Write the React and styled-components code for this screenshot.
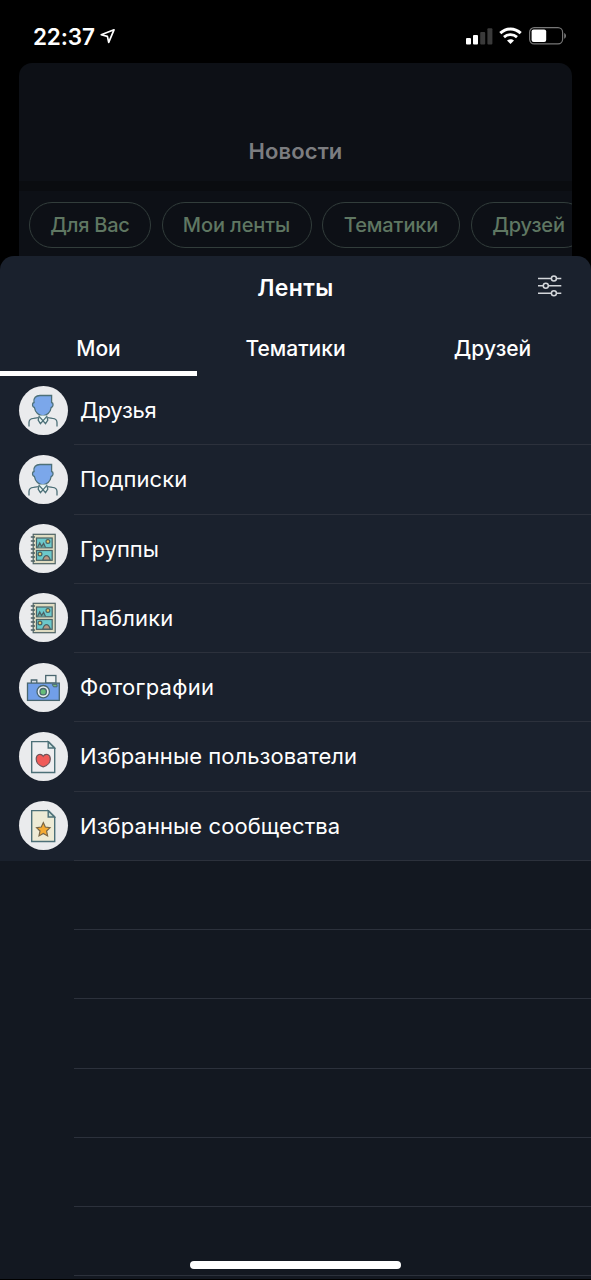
import React from "react";
import styled, { createGlobalStyle } from "styled-components";

const chips = [
  { label: "Для Вас", width: 122, spacing: "-0.25px" },
  { label: "Мои ленты", width: 150, spacing: "-0.1px" },
  { label: "Тематики", width: 138, spacing: "-0.1px" },
  { label: "Друзей", width: 116, spacing: "-0.2px" },
];

const tabs = ["Мои", "Тематики", "Друзей"];

const feeds = [
  { label: "Друзья", icon: PersonIcon, spacing: "-0.35px" },
  { label: "Подписки", icon: PersonIcon, spacing: "0.05px" },
  { label: "Группы", icon: AlbumIcon, spacing: "0px" },
  { label: "Паблики", icon: AlbumIcon, spacing: "0.15px" },
  { label: "Фотографии", icon: CameraIcon, spacing: "0.25px" },
  { label: "Избранные пользователи", icon: HeartIcon, spacing: "0.05px" },
  { label: "Избранные сообщества", icon: StarIcon, spacing: "0.08px" },
];

const emptyRows = [1, 2, 3, 4, 5, 6];

function App() {
  return (
    <Screen>
      <GlobalStyle />
      <StatusBar>
        <Clock>22:37</Clock>
        <LocationIcon />
        <StatusIcons>
          <SignalIcon />
          <WifiIcon />
          <BatteryIcon />
        </StatusIcons>
      </StatusBar>

      <NewsCard>
        <NewsHeader>Новости</NewsHeader>
        <Chips>
          {chips.map((chip) => (
            <Chip key={chip.label} $width={chip.width} $spacing={chip.spacing}>
              {chip.label}
            </Chip>
          ))}
        </Chips>
      </NewsCard>

      <Sheet>
        <SheetHeader>
          <SheetTitle>Ленты</SheetTitle>
          <FilterButton aria-label="Настройки">
            <FilterIcon />
          </FilterButton>
        </SheetHeader>
        <Tabs>
          {tabs.map((tab, i) => (
            <Tab key={tab} $active={i === 0}>
              {tab}
            </Tab>
          ))}
        </Tabs>
        <FeedList>
          {feeds.map(({ label, icon: Icon, spacing }) => (
            <Row key={label}>
              <Avatar>
                <Icon />
              </Avatar>
              <RowBody $spacing={spacing}>{label}</RowBody>
            </Row>
          ))}
          {emptyRows.map((n) => (
            <Row key={n} $empty>
              <RowBody />
            </Row>
          ))}
        </FeedList>
      </Sheet>
      <HomeIndicator />
    </Screen>
  );
}

export default App;

function LocationIcon() {
  return (
    <svg width="17" height="17" viewBox="0 0 17 17" fill="none">
      <path
        d="M14 1.8 L1.2 6.8 L7.4 8.4 L8.7 14.4 Z"
        stroke="#fff"
        strokeWidth="1.7"
        strokeLinejoin="round"
      />
    </svg>
  );
}

function SignalIcon() {
  return (
    <svg width="27" height="17" viewBox="0 0 27 17">
      <rect x="0" y="10" width="5" height="6.5" rx="1" fill="#fff" />
      <rect x="7" y="7" width="5" height="9.5" rx="1" fill="#fff" />
      <rect x="14.2" y="4" width="5" height="12.5" rx="1" fill="#3a3a3a" />
      <rect x="21.4" y="0.2" width="5" height="16.3" rx="1" fill="#3a3a3a" />
    </svg>
  );
}

function WifiIcon() {
  return (
    <svg width="24" height="18" viewBox="0 0 24 18" fill="none">
      <path d="M1.3 6.2 C7.3 0.6 15.7 0.6 21.7 6.2" stroke="#fff" strokeWidth="3" />
      <path d="M5 10.1 C8.7 6.7 14.3 6.7 18 10.1" stroke="#fff" strokeWidth="2.8" />
      <path d="M11.5 17 L8 13.5 C9.9 11.8 13.1 11.8 15 13.5 Z" fill="#fff" />
    </svg>
  );
}

function BatteryIcon() {
  return (
    <svg width="38" height="18" viewBox="0 0 38 18">
      <rect x="0.6" y="0.7" width="33" height="16.2" rx="4.6" fill="none" stroke="#777" strokeWidth="1.2" />
      <rect x="2.6" y="2.6" width="14.6" height="12.4" rx="2" fill="#fff" />
      <path d="M35.2 6 C37.6 7 37.6 10.8 35.2 11.8 Z" fill="#777" />
    </svg>
  );
}

function FilterIcon() {
  return (
    <svg width="24" height="22" viewBox="0 0 24 22" fill="none" stroke="#d3d6da" strokeWidth="1.5">
      <path d="M0 3.5 H13.5 M18.3 3.5 H23.3" />
      <path d="M0 10.8 H5.4 M10.2 10.8 H23.3" />
      <path d="M0 18.2 H13.5 M18.3 18.2 H23.3" />
      <circle cx="15.9" cy="3.5" r="2.5" />
      <circle cx="7.8" cy="10.8" r="2.5" />
      <circle cx="15.9" cy="18.2" r="2.5" />
    </svg>
  );
}

function PersonIcon() {
  return (
    <svg width="49" height="49" viewBox="0 0 49 49" fill="none" stroke="#4d7078" strokeWidth="1.3">
      <path
        d="M15 16.5 C14 12 17 9.3 21.5 9.5 L32.6 9.5 V16.5 C34.8 17 34.4 21 32.2 21.5 C31.5 26.5 27.5 29.8 23.8 29.8 C20 29.8 16.2 26.5 15.4 21.5 C13 21 12.8 17 15 16.5 Z"
        fill="#7ba7ea"
      />
      <path d="M10 40.5 V36.5 C10 33.8 12 32.5 14.5 32.3 L19.5 31.7 M38 40.5 V36.5 C38 33.8 36 32.5 33.5 32.3 L28.5 31.7" />
      <path d="M20.3 29.6 L19.2 34.2 L21.4 37.6 L24 34.8 L26.5 37.6 L28.8 34.2 L27.6 29.6" fill="#e8f4f2" />
      <path d="M20.3 30.6 L24 34.8 L27.6 30.6" />
    </svg>
  );
}

function AlbumIcon() {
  return (
    <svg width="49" height="49" viewBox="0 0 49 49" fill="none" stroke="#4d6264" strokeWidth="1.2">
      <rect x="14.2" y="10.3" width="22" height="29.4" fill="#dfdcc2" />
      <rect x="17.5" y="14" width="15.7" height="9.8" fill="#6cc9cb" />
      <rect x="17.5" y="26.5" width="15.7" height="9.8" fill="#6cc9cb" />
      <path d="M18.5 23.5 L20.7 18.8 L22.6 22.5 L24.6 19.2 L26.5 23.5" fill="#64a7a2" />
      <circle cx="28.9" cy="17.5" r="1.9" fill="#e3c965" />
      <path d="M23.8 36 C24.5 33.5 25.3 31.7 27.5 31.7 C29.7 31.7 30.5 33.5 31.2 36 Z" fill="#b99a84" />
      <circle cx="21" cy="30" r="1.9" fill="#e3c965" />
      <path d="M11.8 13 H16 M11.8 17 H16 M11.8 21 H16 M11.8 25 H16 M11.8 29 H16 M11.8 33 H16 M11.8 37 H16" strokeWidth="1.5" />
    </svg>
  );
}

function CameraIcon() {
  return (
    <svg width="49" height="49" viewBox="0 0 49 49" fill="none" stroke="#49666f" strokeWidth="1.3">
      <path d="M12.3 20 V17 H17.8 V20" fill="#d5dde5" />
      <rect x="26.7" y="12.5" width="10.2" height="7.6" fill="#eef1f1" />
      <rect x="8.5" y="20.1" width="31.8" height="17.3" fill="#719fe8" />
      <circle cx="24.2" cy="28.7" r="6.2" fill="#e8eef0" />
      <circle cx="24.2" cy="28.7" r="3.2" fill="#65bd79" />
      <path d="M33.2 21.3 H38 V23.8 H34.5 Z" fill="#79b97d" strokeWidth="1" />
    </svg>
  );
}

function HeartIcon() {
  return (
    <svg width="49" height="49" viewBox="0 0 49 49" fill="none" stroke="#4d7078" strokeWidth="1.4">
      <path d="M12.7 9.6 H29.5 L35.7 15.8 V40.5 H12.7 Z" fill="#eeeef0" />
      <path d="M29.2 9.8 V16 H35.5 Z" fill="#d2e4e2" />
      <path
        d="M24.2 34.8 C20.2 33.8 17.2 30.6 17.2 27 C17.2 22.2 22 20.8 24.2 24.3 C26.4 20.8 31.3 22.2 31.3 27 C31.3 30.6 28.2 33.8 24.2 34.8 Z"
        fill="#f05a58"
        stroke="#71555a"
        strokeWidth="1.2"
      />
    </svg>
  );
}

function StarIcon() {
  return (
    <svg width="49" height="49" viewBox="0 0 49 49" fill="none" stroke="#4d7078" strokeWidth="1.4">
      <path d="M12.7 9.6 H29.5 L35.7 15.8 V40.5 H12.7 Z" fill="#eeebd6" />
      <path d="M29.2 9.8 V16 H35.5 Z" fill="#cfe0d6" />
      <path
        d="M24.3 21.6 L26.3 26 L31 26.7 L27.6 30 L28.6 34.9 L24.3 32.5 L20 34.9 L21 30 L17.6 26.7 L22.3 26 Z"
        fill="#f5ab35"
        stroke="#7a6747"
        strokeWidth="1.2"
      />
    </svg>
  );
}

const GlobalStyle = createGlobalStyle`
  * {
    box-sizing: border-box;
  }

  body {
    margin: 0;
    background: #000;
    font-family: Inter, "Liberation Sans", sans-serif;
  }
`;

const Screen = styled.div`
  position: relative;
  display: flex;
  flex-direction: column;
  width: 591px;
  height: 1280px;
  padding-bottom: 1px;
  overflow: hidden;
  background: #000;
  color: #fff;
`;

const StatusBar = styled.div`
  flex: none;
  display: flex;
  align-items: center;
  height: 63px;
  padding: 9px 24px 0 33px;
  gap: 5px;
`;

const Clock = styled.div`
  font-size: 22.5px;
  font-weight: 600;
  letter-spacing: -0.15px;
`;

const StatusIcons = styled.div`
  display: flex;
  align-items: center;
  gap: 6px;
  margin-left: auto;
`;

const NewsCard = styled.div`
  flex: none;
  height: 193px;
  margin: 0 19px;
  overflow: hidden;
  border-radius: 13px 13px 0 0;
  background: #0d1016;
`;

const NewsHeader = styled.div`
  display: flex;
  align-items: flex-end;
  justify-content: center;
  height: 128px;
  padding-bottom: 16px;
  border-bottom: 10px solid #0a0c10;
  font-size: 22px;
  line-height: 28px;
  font-weight: 600;
  letter-spacing: 0.1px;
  color: #7c7d80;
`;

const Chips = styled.div`
  display: flex;
  gap: 10.5px;
  padding: 11px 10px 0;
`;

const Chip = styled.div`
  flex: none;
  display: flex;
  align-items: center;
  justify-content: center;
  width: ${(props) => props.$width}px;
  height: 46px;
  border: 1px solid #323d3b;
  border-radius: 23px;
  font-size: 20px;
  font-weight: 500;
  letter-spacing: ${(props) => props.$spacing};
  color: #5f7762;
`;

const Sheet = styled.div`
  flex: 1;
  min-height: 0;
  display: flex;
  flex-direction: column;
  overflow: hidden;
  border-radius: 14px 14px 0 0;
  background: #1a212d;
`;

const SheetHeader = styled.div`
  flex: none;
  display: grid;
  grid-template-columns: 1fr auto 1fr;
  align-items: center;
  height: 64px;
  padding: 0 29px;
`;

const SheetTitle = styled.div`
  grid-column: 2;
  font-size: 23px;
  font-weight: 600;
  letter-spacing: 0.4px;
`;

const FilterButton = styled.button`
  display: flex;
  justify-self: end;
  padding: 0 0 4px;
  border: 0;
  background: none;
`;

const Tabs = styled.div`
  flex: none;
  display: grid;
  grid-template-columns: repeat(3, 1fr);
  height: 56px;
`;

const Tab = styled.div`
  display: flex;
  align-items: center;
  justify-content: center;
  padding-top: ${(props) => (props.$active ? 5 : 0)}px;
  border-bottom: ${(props) => (props.$active ? "5px solid #fff" : "0")};
  font-size: 21px;
  font-weight: 500;
`;

const FeedList = styled.div`
  flex: 1;
  min-height: 0;
  overflow: hidden;
  background: #131821;
`;

const Row = styled.div`
  display: flex;
  align-items: center;
  height: 69.25px;
  padding-left: ${(props) => (props.$empty ? 74 : 18.5)}px;
  background: ${(props) => (props.$empty ? "#131821" : "#1a212d")};
`;

const Avatar = styled.div`
  flex: none;
  width: 49px;
  height: 49px;
  margin: 0 6.5px 1px 0;
  overflow: hidden;
  border-radius: 50%;
  background: #eaebed;
`;

const RowBody = styled.div`
  flex: 1;
  display: flex;
  align-items: center;
  align-self: stretch;
  padding-left: 6px;
  border-bottom: 1px solid #2c313c;
  font-size: 22px;
  letter-spacing: ${(props) => props.$spacing || "0"};
`;

const HomeIndicator = styled.div`
  position: absolute;
  left: 190px;
  bottom: 11px;
  width: 211px;
  height: 8px;
  border-radius: 4px;
  background: #fff;
`;
